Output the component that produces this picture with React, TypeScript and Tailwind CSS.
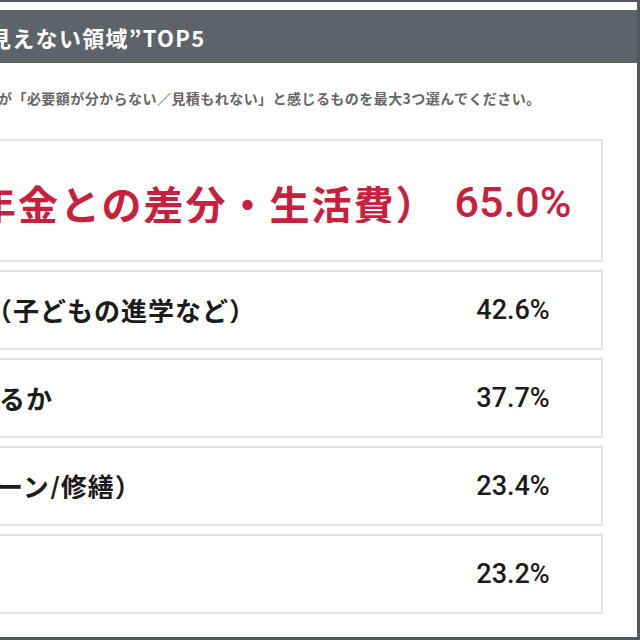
export default function App() {
  const jp = { fontFamily: '"Noto Sans CJK JP", "Noto Sans", sans-serif' };
  const num = { fontFamily: 'Roboto, "Liberation Sans", sans-serif' };
  const rows = [
    { label: "（子どもの進学など）", value: "42.6%", ml: "-ml-[14px]" },
    { label: "るか", value: "37.7%", ml: "-ml-[1px]" },
    { label: "ーン/修繕）", value: "23.4%", ml: "-ml-[3px]" },
    { label: "", value: "23.2%", ml: "ml-0" },
  ];
  return (
    <div className="w-[640px] h-[640px] bg-white overflow-hidden" style={jp}>
      <div className="h-full border-t-2 border-r-[3px] border-b-[3px] border-[#55575f] flex flex-col pt-[8px]">
        <div className="h-[53px] bg-[#5e6269] flex items-center overflow-hidden">
          <div className="-ml-[11px] text-white text-[22px] font-bold tracking-[1.3px] whitespace-nowrap leading-none">
            見えない領域”TOP5
          </div>
        </div>
        <div className="h-[76px] flex items-center overflow-hidden">
          <div className="-ml-[2px] -mt-[6px] text-[14px] font-bold text-[#666666] tracking-[0.45px] whitespace-nowrap">
            が「必要額が分からない／見積もれない」と感じるものを最大3つ選んでください。
          </div>
        </div>
        <div className="flex flex-col gap-[8px] mr-[34px]">
          <div className="h-[123px] border-2 border-l-0 border-[#e3e3e3] flex items-center">
            <div className="flex-1 overflow-hidden">
              <div className="-ml-[24px] mt-[4px] text-[40px] font-bold text-[#c8213d] tracking-[2px] whitespace-nowrap leading-none">
                年金との差分・生活費）
              </div>
            </div>
            <div className="w-[176px] mt-[4px] text-center text-[43px] font-medium text-[#c8213d] leading-none" style={num}>
              65.0%
            </div>
          </div>
          {rows.map((r) => (
            <div key={r.value} className="h-[80px] border-2 border-l-0 border-[#e3e3e3] flex items-center">
              <div className="flex-1 overflow-hidden">
                <div className={`${r.ml} text-[26px] font-bold text-[#1c1c1c] tracking-[1px] whitespace-nowrap leading-none`}>
                  {r.label}
                </div>
              </div>
              <div className="w-[176px] text-center text-[27px] font-medium text-[#1c1c1c] leading-none" style={num}>
                {r.value}
              </div>
            </div>
          ))}
        </div>
      </div>
    </div>
  );
}
